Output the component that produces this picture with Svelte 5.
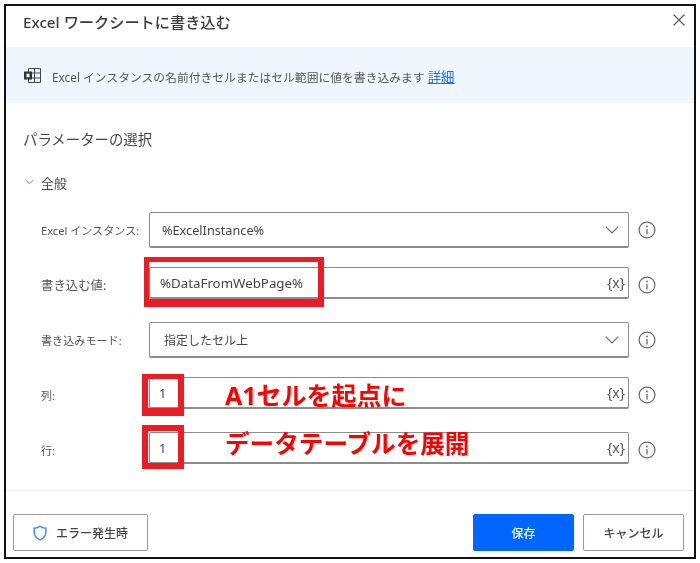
<script>
  const rows = [
    { label: 'Excel インスタンス:', value: '%ExcelInstance%', kind: 'select', type: 'text' },
    { label: '書き込む値:', value: '%DataFromWebPage%', kind: 'var', type: 'data' },
    { label: '書き込みモード:', value: '指定したセル上', kind: 'select', type: 'mode' },
    { label: '列:', value: '1', kind: 'var', type: 'num' },
    { label: '行:', value: '1', kind: 'var', type: 'num' }
  ];
</script>

<div class="page">
  <div class="dialog">
    <header class="head">
      <h1>Excel ワークシートに書き込む</h1>
      <svg class="close" viewBox="0 0 12 12" width="12" height="12" aria-label="閉じる">
        <path d="M.5.5l11 11M11.5.5l-11 11" fill="none" stroke="#555" stroke-width="1.1" />
      </svg>
    </header>

    <div class="banner">
      <svg class="xl" viewBox="0 0 18 17" width="18" height="17">
        <path d="M5.5 1.5h12v14h-12zM5.5 6h12M5.5 11h12M11.5 1.5v14" fill="none" stroke="#444" stroke-width="1" />
        <rect x="1" y="4.5" width="8" height="8" fill="#333" />
        <rect x="3.5" y="6.7" width="3" height="3.6" fill="#eef3fa" />
      </svg>
      <span>Excel インスタンスの名前付きセルまたはセル範囲に値を書き込みます <a href="#top">詳細</a></span>
    </div>

    <h2>パラメーターの選択</h2>

    <div class="group">
      <svg viewBox="0 0 10 6" width="9" height="6"><path d="M.5.5L5 5 9.5.5" fill="none" stroke="#777" stroke-width="1" /></svg>
      <span>全般</span>
    </div>

    <div class="form">
      {#each rows as r}
        <div class="row">
          <div class="label">{r.label}</div>
          <div class="field {r.kind} {r.type}">
            <span class="value">{r.value}</span>
            {#if r.kind === 'select'}
              <svg class="chev" viewBox="0 0 14 8" width="14" height="8"><path d="M.7.7L7 7l6.3-6.3" fill="none" stroke="#5a6b80" stroke-width="1.2" /></svg>
            {:else}
              <span class="x">{'{x}'}</span>
            {/if}
          </div>
          <svg class="info" viewBox="0 0 18 18" width="18" height="18">
            <circle cx="9" cy="9" r="7.9" fill="none" stroke="#666" stroke-width="1.2" />
            <path d="M9 8v5.4" stroke="#666" stroke-width="1.3" />
            <circle cx="9" cy="5.5" r="0.9" fill="#666" />
          </svg>
        </div>
      {/each}
    </div>

    <footer class="foot">
      <button class="btn err">
        <svg viewBox="0 0 14 16" width="14" height="16"><path d="M7 1.2c1.6 1.3 3.5 1.9 5.8 2v4.3c0 3.3-2.2 5.8-5.8 7.3-3.6-1.5-5.8-4-5.8-7.3V3.2c2.3-.1 4.2-.7 5.8-2z" fill="none" stroke="#3f86e8" stroke-width="1.4" /></svg>
        エラー発生時
      </button>
      <button class="btn save">保存</button>
      <button class="btn cancel">キャンセル</button>
    </footer>
  </div>

  <div class="mark m1"></div>
  <div class="mark m2"></div>
  <div class="mark m3"></div>
  <div class="note n1">A1セルを起点に</div>
  <div class="note n2">データテーブルを展開</div>
</div>

<style>
  :global(body) { margin: 0; background: #fff; }
  .page {
    position: relative;
    width: 700px;
    height: 563px;
    padding: 4px;
    box-sizing: border-box;
    font-family: "Noto Sans", "Noto Sans CJK JP", sans-serif;
    color: #333;
    filter: blur(0.35px);
  }
  .dialog {
    height: 555px;
    width: 692px;
    box-sizing: border-box;
    border: 2px solid #111;
    background: #fff;
    display: flex;
    flex-direction: column;
  }
  .head {
    height: 41px;
    box-sizing: border-box;
    flex: none;
    display: flex;
    align-items: center;
    justify-content: space-between;
    padding: 0 9px 9px 17px;
  }
  .close { margin-bottom: 4px; }
  h1 { margin: 0; font-size: 15.2px; font-weight: 500; color: #3a3a3a; line-height: 20px; }
  .banner {
    height: 56px;
    box-sizing: border-box;
    flex: none;
    background: #f0f6fe;
    display: flex;
    align-items: center;
    gap: 11px;
    padding: 1px 0 0 17px;
    font-size: 11.8px;
    color: #555;
  }
  .xl { flex: none; }
  a { color: #1a73e8; text-decoration: underline; font-size: 13.4px; }
  h2 {
    margin: 25px 0 0 17px;
    font-size: 14.4px;
    font-weight: 400;
    line-height: 24px;
    color: #444;
  }
  .group {
    margin: 20px 0 0 19px;
    height: 20px;
    display: flex;
    align-items: center;
    gap: 7px;
    font-size: 13px;
    color: #444;
  }
  .form {
    margin-top: 20px;
    display: flex;
    flex-direction: column;
    gap: 19px;
    padding-bottom: 22px;
    border-bottom: 1px solid #eee;
  }
  .row {
    height: 36px;
    display: flex;
    align-items: center;
    padding-left: 35px;
  }
  .label { width: 108px; flex: none; font-size: 11.1px; color: #555; white-space: nowrap; }
  .row:nth-child(2) .label { font-size: 12.4px; }
  .field {
    width: 480px;
    box-sizing: border-box;
    border: 1px solid #8c8c8c;
    border-bottom-width: 2px;
    border-right-width: 1.5px;
    border-radius: 2px;
    display: flex;
    align-items: center;
    justify-content: space-between;
    padding: 0 9px 0 12px;
    font-size: 12.7px;
    color: #444;
    align-self: flex-start;
  }
  .field.select { height: 36px; }
  .field.var { height: 32px; }
  .field.data { font-size: 13.3px; padding-left: 10px; }
  .field.mode { font-size: 12px; padding-left: 14px; }
  .field.num { padding-left: 9px; }
  .x { font-size: 14px; color: #555; margin-right: -6px; }
  .info { margin-left: 9px; flex: none; }
  .foot {
    display: flex;
    align-items: center;
    gap: 9px;
    padding: 23px 10px 0 7px;
  }
  .btn {
    height: 37px;
    box-sizing: border-box;
    border: 1px solid #999;
    border-radius: 2px;
    background: #fff;
    font: inherit;
    font-size: 12px;
    font-weight: 500;
    color: #444;
    display: flex;
    align-items: center;
    justify-content: center;
  }
  .err { width: 135px; gap: 9px; margin-right: auto; }
  .save { width: 101px; background: #0066ff; border-color: #0066ff; color: #fff; }
  .cancel { width: 101px; }
  .mark {
    position: absolute;
    border: 6px solid #ed1c24;
    box-sizing: border-box;
  }
  .m1 { left: 144px; top: 257px; width: 180px; height: 50px; border-width: 5px 6px 8px 5px; }
  .m2 { left: 142px; top: 374px; width: 42px; height: 42px; border-top-width: 5px; border-bottom-width: 8px; }
  .m3 { left: 142px; top: 425px; width: 42px; height: 44px; }
  .note {
    position: absolute;
    left: 225px;
    font-weight: 700;
    line-height: 28px;
    color: #f00;
    white-space: nowrap;
  }
  .n1 { top: 381px; font-size: 25px; }
  .n2 { top: 430px; font-size: 24.6px; }
</style>
